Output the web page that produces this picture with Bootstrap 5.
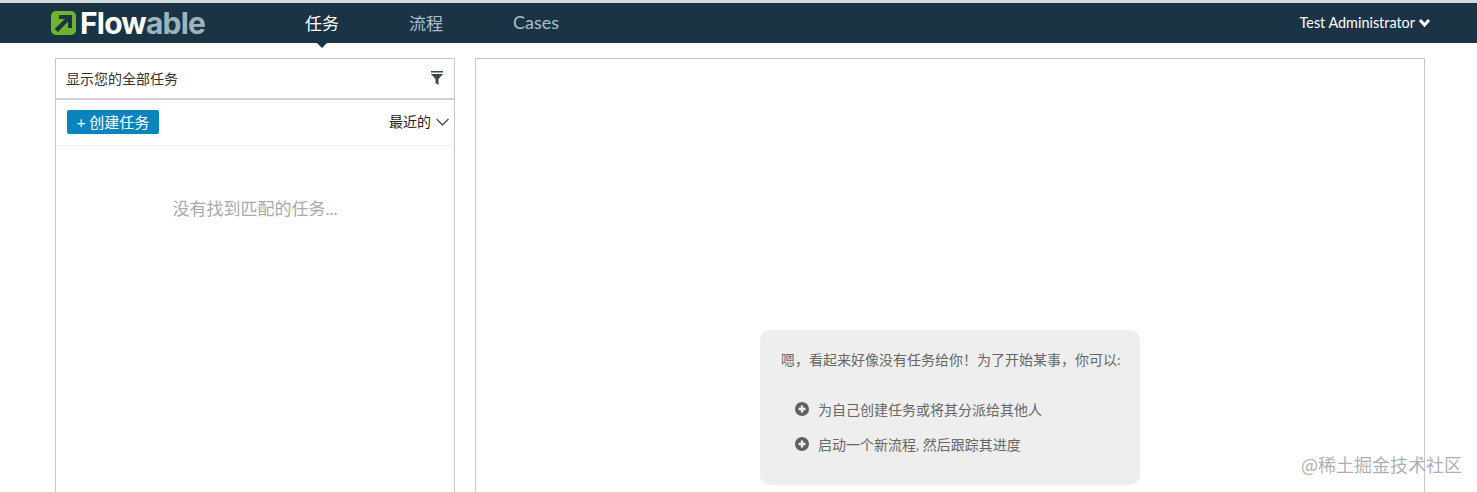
<!DOCTYPE html>
<html lang="zh">
<head>
<meta charset="utf-8">
<title>Flowable</title>
<link href="https://cdn.jsdelivr.net/npm/bootstrap@5.3.0/dist/css/bootstrap.min.css" rel="stylesheet">
<style>
html,body{height:492px;overflow:hidden;background:#fff;}
body{font-family:"Lato","Noto Sans CJK SC",sans-serif;color:#333;border-top:3px solid #d3d9dd;position:relative;}
.topbar{height:40px;background:#1a3446;padding-left:50px;padding-right:46px;}
.brand{width:255px;gap:4px;}
.brand-name{font-family:"Inter","Noto Sans CJK SC",sans-serif;font-weight:700;font-size:30px;line-height:40px;letter-spacing:-.8px;color:#fff;}
.brand-name span{color:#9db4bf;}
.tab-item{position:relative;font-size:17px;line-height:38px;padding-top:2px;color:#a9c0cb;text-decoration:none;margin-right:70px;}
.tab-item.is-on{color:#fff;}
.tab-item.is-on::after{content:"";position:absolute;left:50%;bottom:-5px;margin-left:-6px;border-left:6px solid transparent;border-right:6px solid transparent;border-top:6px solid #1a3446;}
.tab-latin{font-size:18px;padding-top:0;}
.user-menu{font-size:14.4px;color:#fff;gap:3px;}
.page-wrap{padding:15px 52px 0 55px;gap:20px;}
.left-pane{width:400px;height:440px;border:1px solid #c8c8c8;border-bottom:0;}
.right-pane{width:950px;height:440px;border:1px solid #c8c8c8;border-bottom:0;padding-top:271px;}
.pane-head{height:41px;border-bottom:2px solid #d0d0d0;padding:0 11px 0 10px;font-size:14px;color:#333;}
.filter-icon{margin-bottom:2px;}
.pane-tools{height:46px;border-bottom:1px solid #f0f0f0;padding:0 5px 2px 11px;}
.btn-create{background:#0a84bc;color:#fff;font-size:15px;line-height:24px;height:24px;width:92px;padding:0;border:0;border-radius:2px;}
.btn-create:hover{background:#0a84bc;color:#fff;}
.sort-label{font-size:14px;color:#222;gap:5px;}
.empty-note{font-size:17px;color:#aaa;padding-top:50px;text-align:center;}
.help-box{width:380px;height:155px;background:#eee;border-radius:10px;padding:20px 0 0 21px;font-size:14px;color:#666;}
.help-title{line-height:20px;margin-bottom:29px;}
.help-line{padding-left:14px;gap:9px;height:20px;margin-bottom:15px;}
.mark-text{position:absolute;right:15px;bottom:18px;font-size:18px;line-height:20px;color:rgba(120,120,120,.6);font-family:"Noto Sans CJK SC",sans-serif;}
</style>
</head>
<body>
<nav class="topbar d-flex align-items-center">
  <div class="brand d-flex align-items-center">
    <svg width="26" height="26" viewBox="0 0 26 26"><rect x="1" y="1" width="25" height="24" rx="5" fill="#6cb52d"/><path d="M9 5H22V18H18V11.500L8 22L4.500 19L15 9H9Z" fill="#1a3446"/></svg>
    <div class="brand-name">Flow<span>able</span></div>
  </div>
  <div class="tabs-row d-flex">
    <a class="tab-item is-on" href="#">任务</a>
    <a class="tab-item" href="#">流程</a>
    <a class="tab-item tab-latin" href="#">Cases</a>
  </div>
  <div class="user-menu ms-auto d-flex align-items-center">Test Administrator
    <svg width="13" height="10" viewBox="0 0 13 10"><path d="M2 2L6.500 7L11 2" fill="none" stroke="#fff" stroke-width="3"/></svg>
  </div>
</nav>
<main class="page-wrap d-flex">
  <section class="left-pane">
    <div class="pane-head d-flex align-items-center justify-content-between">
      <span>显示您的全部任务</span>
      <svg class="filter-icon" width="12" height="14" viewBox="0 0 12 14"><path d="M0 0H12V1.500H0ZM0 3H12L7.500 8V14L4.500 12V8Z" fill="#3c4650"/></svg>
    </div>
    <div class="pane-tools d-flex align-items-center justify-content-between">
      <button class="btn btn-create" type="button">+ 创建任务</button>
      <div class="sort-label d-flex align-items-center">最近的
        <svg width="13" height="8" viewBox="0 0 13 8"><path d="M.5 .8L6.500 6.800L12.500 .8" fill="none" stroke="#333" stroke-width="1.200"/></svg>
      </div>
    </div>
    <div class="empty-note">没有找到匹配的任务...</div>
  </section>
  <section class="right-pane d-flex justify-content-center">
    <div class="help-box">
      <div class="help-title">嗯，看起来好像没有任务给你！为了开始某事，你可以:</div>
      <div class="help-line d-flex align-items-center">
        <svg width="14" height="14" viewBox="0 0 14 14"><circle cx="7" cy="7" r="7" fill="#5f5f5f"/><path d="M7 3.500V10.500M3.500 7H10.500" stroke="#eee" stroke-width="2.400"/></svg>
        <span>为自己创建任务或将其分派给其他人</span>
      </div>
      <div class="help-line d-flex align-items-center">
        <svg width="14" height="14" viewBox="0 0 14 14"><circle cx="7" cy="7" r="7" fill="#5f5f5f"/><path d="M7 3.500V10.500M3.500 7H10.500" stroke="#eee" stroke-width="2.400"/></svg>
        <span>启动一个新流程, 然后跟踪其进度</span>
      </div>
    </div>
  </section>
</main>
<div class="mark-text">@稀土掘金技术社区</div>
<script src="https://cdn.jsdelivr.net/npm/bootstrap@5.3.0/dist/js/bootstrap.bundle.min.js"></script>
</body>
</html>
